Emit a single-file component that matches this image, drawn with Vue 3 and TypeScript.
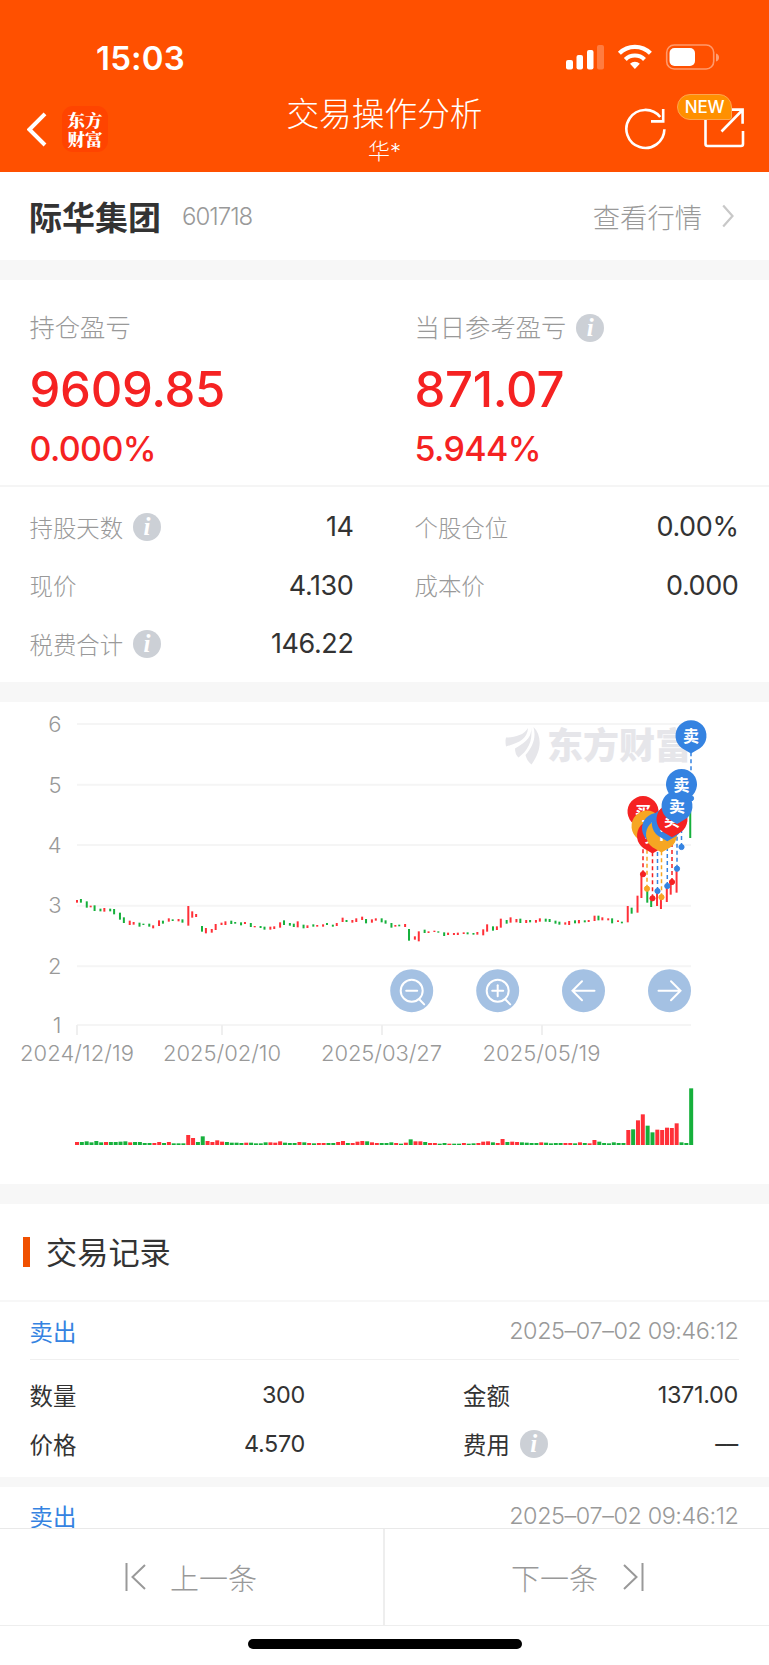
<script setup lang="ts">
type Tone = 'r' | 'g'
interface Candle { x: number; y: number; h: number; tone: Tone }
interface Bar { x: number; h: number; tone: Tone }
interface Trade { x: number; y: number; kind: 'buy' | 'sell' | 'both' }

// tone + top-bottom of each daily candle, in thirds of a pixel below the chart's top edge
const candleData = `r600-608 g597-608 g604-623 r617-622 g616-633 g626-634 r624-635 g626-634 g627-643 g638-659
g652-669 r662-675 r666-674 g668-680 g671-675 g671-680 r676-685 r661-678 g662-671 r655-665
g658-663 r657-664 g658-668 r618-677 r634-653 r642-651 g678-695 r684-700 r687-698 r672-690
r668-675 r664-675 g662-672 g666-671 g667-676 r666-672 g669-681 r678-682 g678-684 g680-689
r680-689 r679-687 r667-683 g661-675 g669-677 g671-681 r664-682 g674-685 r676-684 g673-680
r675-680 r673-680 g669-675 g674-680 r669-678 r653-666 g660-666 r660-668 r655-666 r650-660
g657-670 r658-668 r655-662 g655-667 g661-671 g669-683 r675-680 g674-679 r672-681 g687-722
r709-719 r694-724 g689-699 r694-699 r692-696 g694-698 g697-708 r698-705 r699-705 r698-705
r697-702 g697-703 g699-704 r696-704 r688-706 r673-695 g679-692 r679-690 r656-683 g660-671
r652-668 r657-667 g656-669 r660-669 g660-667 r660-668 r655-665 g656-665 g657-666 g662-671
g665-674 r667-674 r663-675 g661-670 r660-670 g661-667 r660-666 r647-663 g647-661 r652-661
r655-661 g655-670 r661-666 g665-670 r618-667 g623-641 r587-638 r528-594 g572-608 g601-621
r578-618 r597-627 r563-606 r551-584 r512-578 r441-443 r320-323 g335-414`

const volumeData = `r9 g9 g11 g8 g12 g8 r9 g9 g9 g10 g11 r8 g9 g9 g6 g6 r6 r9 g6 r9 g5 g5 g5 r30 r21 g9 g26 r12 r9 r14
r10 g9 g7 g7 g6 r7 g7 g5 g5 g8 r8 r7 r11 g7 g6 g6 r9 g8 r6 g5 r6 r6 g6 g6 r9 r12 g6 r6 r10 r12
g11 r8 r6 g6 g6 g8 r6 g4 r7 g17 r11 r11 g9 r6 r6 g4 g6 r4 g4 g4 r6 g4 g5 r6 r10 r11 g8 r6 r18 g9
r10 r9 g8 g7 g6 g6 r8 g7 g5 g6 g6 r6 r6 g5 r8 g6 r5 r15 g10 g6 g5 g8 g6 g6 r45 g47 r74 r92 g58 g38
r46 r45 r52 r51 r65 g8 g6 g170`

const candles: Candle[] = candleData.split(/\s+/).map((s, i) => {
  const [a, b] = s.slice(1).split('-').map(Number)
  return { x: 77 + 1.953 * Math.floor(0.05 + 2.4765 * i), y: a / 3 - 2, h: (b - a) / 3, tone: s[0] as Tone }
})
const bars: Bar[] = volumeData.split(/\s+/).map((s, i) => ({
  x: 77 + 4.836 * i, h: Number(s.slice(1)) / 3, tone: s[0] as Tone,
}))

const trades: Trade[] = [
  { x: 643, y: 172.2, kind: 'buy' },
  { x: 647, y: 186.7, kind: 'both' },
  { x: 652.5, y: 196.3, kind: 'buy' },
  { x: 657.5, y: 189, kind: 'sell' },
  { x: 661.5, y: 195.2, kind: 'both' },
  { x: 667.3, y: 184, kind: 'sell' },
  { x: 672, y: 180, kind: 'buy' },
  { x: 677, y: 166.7, kind: 'sell' },
  { x: 681.5, y: 145, kind: 'sell' },
  { x: 691, y: 96.3, kind: 'sell' },
]
const label = { buy: '买', sell: '卖', both: 'T' }

const grid = [22, 82.7, 143, 203.7, 264.2, 323]
const yLabels = ['6', '5', '4', '3', '2', '1']
const xLabels = [
  { t: '2024/12/19', x: 77, w: 114 },
  { t: '2025/02/10', x: 222, w: 118 },
  { t: '2025/03/27', x: 381.5, w: 121 },
  { t: '2025/05/19', x: 541.5, w: 118 },
]
const tools = [
  { x: 411.7, icon: 'minus' },
  { x: 497.7, icon: 'plus' },
  { x: 583.5, icon: 'left' },
  { x: 669.5, icon: 'right' },
]
const metrics = [
  { l: '持股天数', v: '14', info: true },
  { l: '个股仓位', v: '0.00%', info: false },
  { l: '现价', v: '4.130', info: false },
  { l: '成本价', v: '0.000', info: false },
  { l: '税费合计', v: '146.22', info: true },
]
const records = [
  { side: '卖出', time: '2025–07–02 09:46:12', qty: '300', amount: '1371.00', price: '4.570', fee: '––' },
  { side: '卖出', time: '2025–07–02 09:46:12', qty: '300', amount: '1371.00', price: '4.570', fee: '––' },
]
</script>

<template>
  <div class="screen">
    <header class="header">
      <div class="status">
        <span class="clock">15:03</span>
        <svg class="status-icons" width="156" height="28" viewBox="0 0 156 28" fill="#fff">
          <rect x="0" y="16" width="7" height="9.5" rx="2" />
          <rect x="10.5" y="11" width="6.5" height="14.5" rx="2" />
          <rect x="21" y="6" width="6.5" height="19.5" rx="2" />
          <rect x="31" y="1" width="7" height="24.5" rx="2" opacity=".25" />
          <g fill="none" stroke="#fff" stroke-width="4.2">
            <path d="M53.4 9.2a22 22 0 0 1 31 0" />
            <path d="M59.3 15.4a13.8 13.8 0 0 1 19.2 0" />
          </g>
          <path d="M68.9 25 L64 19.8a7 7 0 0 1 9.8 0z" />
          <rect x="100.7" y="1" width="47" height="24" rx="7.5" fill="none" stroke="#fff" stroke-width="1.6" opacity=".42" />
          <rect x="103.5" y="4" width="25.5" height="18" rx="5" />
          <path d="M150 9.5q3 .8 3 4t-3 4z" opacity=".45" />
        </svg>
      </div>
      <div class="nav">
        <div class="nav-left">
          <svg width="20" height="35" viewBox="0 0 20 35"><path d="M18 1.8 L2.4 17.5 L18 33" fill="none" stroke="#fff" stroke-width="4" /></svg>
          <div class="brand"><span>东方</span><span>财富</span></div>
        </div>
        <div class="titles">
          <div class="title">交易操作分析</div>
          <div class="subtitle">华*</div>
        </div>
        <div class="nav-right">
          <svg width="126" height="58" viewBox="0 0 126 58" fill="none" stroke="#fff" stroke-width="2.6">
            <path d="M43.4 36.2a19 19 0 1 1-4.2-12.2" />
            <path d="M42.2 16v12.4H30" />
            <path d="M84.5 22v29a2 2 0 0 0 2 2h33.5a2 2 0 0 0 2-2V38" />
            <path d="M108 16.6h13.6v14.2M121 17.5 L100.5 38.5" />
          </svg>
          <span class="new">NEW</span>
        </div>
      </div>
    </header>

    <section class="stock">
      <b>际华集团</b><span class="code">601718</span>
      <span class="quote">查看行情</span>
      <svg width="13" height="24" viewBox="0 0 13 24"><path d="M1.2 1.5 L10.5 12 L1.2 22.5" fill="none" stroke="#c8c8c8" stroke-width="2.2" /></svg>
    </section>

    <section class="summary">
      <div>
        <div class="cap">持仓盈亏</div>
        <div class="big">9609.85</div>
        <div class="pct">0.000%</div>
      </div>
      <div>
        <div class="cap">当日参考盈亏<i class="info">i</i></div>
        <div class="big day">871.07</div>
        <div class="pct">5.944%</div>
      </div>
    </section>
    <section class="metrics">
      <div v-for="m in metrics" :key="m.l" class="metric">
        <span>{{ m.l }}</span><i v-if="m.info" class="info">i</i><em>{{ m.v }}</em>
      </div>
    </section>

    <section class="chart">
      <svg width="769" height="482" viewBox="0 0 769 482">
        <g stroke="#f5f5f5" stroke-width="2">
          <line v-for="y in grid" :key="y" x1="77" x2="691" :y1="y" :y2="y" />
        </g>
        <g stroke="#efefef" stroke-width="2">
          <line v-for="l in xLabels" :key="l.t" :x1="Math.round(l.x)" :x2="Math.round(l.x)" y1="323" y2="333" />
        </g>
        <g class="axis">
          <text v-for="(t, i) in yLabels" :key="t" x="61.5" :y="[30, 90.5, 151, 211, 271.5, 331][i]" text-anchor="end">{{ t }}</text>
          <text v-for="l in xLabels" :key="l.t" :x="l.x" y="358.5" text-anchor="middle" :textLength="l.w">{{ l.t }}</text>
        </g>
        <g fill="#e6e6ea">
          <path d="M506 35.5c8-.2 18-2 22-9.500c-.5 10.500-9 15-22 18.500q-1-5 0-9z" />
          <path d="M531 25c1 9-3 14-16 21.500q0 6 3.500 9c8-6 15-15 12.500-30.500z" />
          <path d="M533.500 25c9 9 8 24-2 37.500q-5-4-6-9.500c7-8 11-17 8-28z" />
          <text x="547" y="57" class="mark" textLength="144">东方财富</text>
        </g>
        <rect v-for="(c, i) in candles" :key="i" :class="c.tone" :x="c.x - 1" :y="c.y" width="2" :height="c.h" />
        <rect v-for="(b, i) in bars" :key="'v' + i" :class="b.tone" :x="b.x - 2" :y="443 - b.h" width="4" :height="b.h" />
        <g v-for="(t, i) in trades" :key="'l' + i" :class="t.kind">
          <line :x1="t.x" :x2="t.x" :y1="t.y - 46" :y2="t.y" class="lead" />
          <circle :cx="t.x" :cy="t.y" r="2.6" />
        </g>
        <g v-for="(t, i) in trades" :key="'p' + i" :class="t.kind" :transform="`translate(${t.x} ${t.y - 62.5})`">
          <path d="M-9 12.500 L0 17.700 L9 12.500 A15.500 15.500 0 1 0-9 12.500z" />
          <text y="6" text-anchor="middle" class="pin">{{ label[t.kind] }}</text>
        </g>
        <g v-for="t in tools" :key="t.icon" :transform="`translate(${t.x} 288.700)`" fill="none" stroke="#fff" stroke-width="2" stroke-linecap="round">
          <circle r="21.500" fill="#a4c1e3" stroke="none" />
          <template v-if="t.icon === 'minus' || t.icon === 'plus'">
            <circle r="11" />
            <path d="M-5.500 0h11M7.500 8.500 L12.500 13.700" />
            <path v-if="t.icon === 'plus'" d="M0-5.500v11" />
          </template>
          <path v-else-if="t.icon === 'left'" d="M11 0H-11M-1.500-9.500 L-11 0 L-1.500 9.500" />
          <path v-else d="M-11 0H11M1.500-9.500 L11 0 L1.500 9.500" />
        </g>
      </svg>
    </section>

    <h2 class="heading">交易记录</h2>
    <article v-for="(r, i) in records" :key="i" class="record">
      <div class="top"><span class="side">{{ r.side }}</span><time>{{ r.time }}</time></div>
      <dl>
        <dt>数量</dt><dd>{{ r.qty }}</dd>
        <dt class="second">金额</dt><dd>{{ r.amount }}</dd>
        <dt>价格</dt><dd>{{ r.price }}</dd>
        <dt class="second">费用<i class="info">i</i></dt><dd class="fee">{{ r.fee }}</dd>
      </dl>
    </article>

    <footer class="footer">
      <div class="pager">
        <button class="prev">
          <svg width="22" height="28" viewBox="0 0 22 28"><path d="M1.500 0v28M20 2 L7.500 14 L20 26" fill="none" stroke="#999" stroke-width="2" /></svg>
          <span>上一条</span>
        </button>
        <button class="next">
          <span>下一条</span>
          <svg width="22" height="28" viewBox="0 0 22 28"><path d="M20.500 0v28M2 2 L14.500 14 L2 26" fill="none" stroke="#999" stroke-width="2" /></svg>
        </button>
      </div>
      <div class="home"></div>
    </footer>
  </div>
</template>

<style>
body { background: #fff; }
</style>

<style scoped>
* { box-sizing: border-box; }
.screen {
  position: relative; width: 769px; height: 1665px; overflow: hidden; background: #fff; color: #333;
  font-family: Inter, "Noto Sans CJK SC", sans-serif; font-weight: 300; letter-spacing: 0;
}
.header { height: 172px; background: #ff5000; color: #fff; }
.status { height: 90px; display: flex; justify-content: space-between; align-items: flex-start; padding: 44px 62px 0 96px; }
.clock { font-size: 33px; line-height: 28px; font-weight: 600; letter-spacing: .2px; }
.status-icons { margin-right: -15px; }
.nav { display: grid; grid-template-columns: 240px 1fr 240px; height: 82px; }
.nav-left { display: flex; padding: 22px 0 0 27px; gap: 15px; }
.brand { width: 46px; height: 46px; margin-top: -6px; border-radius: 11px; background: #ff4400; display: flex; flex-direction: column; justify-content: center; align-items: center; }
.brand span { font: 900 17.5px/19px "Noto Serif CJK SC", "Noto Sans CJK SC", sans-serif; }
.nav-left svg { margin-top: 0; }
.titles { text-align: center; }
.title { font-size: 32.700px; line-height: 48px; margin: 0 -20px; }
.subtitle { font-size: 22px; line-height: 26px; }
.nav-right { position: relative; padding: 3px 0 0 92px; }
.nav-right svg { display: block; }
.new {
  position: absolute; left: 148px; top: 4px; width: 55px; height: 26px; border-radius: 13px 13px 3px 13px; border: 1px solid #ffa44e;
  background: #ff9000; font-size: 17px; line-height: 24px; font-weight: 500; text-align: center; letter-spacing: -.2px;
}
.stock { height: 88px; display: flex; align-items: center; padding: 0 34px 0 29px; color: #999; }
.stock b { font-size: 33px; font-weight: 700; color: #333; }
.code { font-size: 24px; margin-left: 21px; letter-spacing: -1px; }
.quote { margin-left: auto; margin-right: 20px; font-size: 27.300px; }
.summary { border-top: 20px solid #f7f7f7; border-bottom: 2px solid #f5f5f5; height: 227px; display: grid; grid-template-columns: 385px 1fr; padding: 28px 0 0 29.500px; }
.cap { display: flex; align-items: center; font-size: 25.300px; line-height: 40px; height: 40px; color: #999; }
.big { font-size: 49px; line-height: 60px; margin-top: 12px; font-weight: 500; color: #f52222; letter-spacing: -.3px; }
.pct { font-size: 34px; line-height: 44px; margin-top: 7px; font-weight: 500; color: #f52222; letter-spacing: -.6px; }
.info {
  display: inline-block; flex: none; width: 28px; height: 28px; border-radius: 50%; background: #ccd0d6; color: #fff; margin-left: 10px;
  font: italic bold 25px/27px "Liberation Serif", serif; text-align: center;
}
.metrics { height: 195px; padding: 10.500px 31px 0 29.500px; display: grid; grid-template-columns: 324px 324px; column-gap: 61px; grid-auto-rows: 58.600px; }
.metric { display: flex; align-items: center; font-size: 23.400px; color: #999; }
.metric em { margin-left: auto; font-style: normal; font-size: 27px; color: #333; letter-spacing: -.4px; font-weight: 400; }
.chart { border-top: 20px solid #f7f7f7; border-bottom: 20px solid #f7f7f7; height: 522px; }
.chart svg { display: block; }
.r { fill: #ff3038; }
.g { fill: #16b03c; }
.axis { fill: #999; font-size: 22px; font-weight: 300; }
.mark { font-weight: 900; font-size: 36px; }
.buy { fill: #f52222; stroke: #f52222; }
.sell { fill: #3583e1; stroke: #3583e1; }
.both { fill: #f6a623; stroke: #f6a623; }
.buy path, .sell path, .both path { stroke: none; }
.lead { stroke-width: 1.500; stroke-dasharray: 4 3; }
.pin { fill: #fff; stroke: none; font-size: 16px; font-weight: 700; }
.heading { margin: 0; height: 98px; padding: 0 0 3px 46px; border-bottom: 2px solid #f7f7f7; display: flex; align-items: center; font-size: 31.200px; font-weight: 400; position: relative; }
.heading::before { content: ""; position: absolute; left: 23px; top: 33px; width: 7px; height: 30px; background: #f05000; }
.record { border-bottom: 10px solid #f7f7f7; height: 185px; font-size: 23.400px; font-weight: 400; }
.top { margin: 0 30.500px 0 29.500px; height: 58px; border-bottom: 1px solid #f0f0f0; display: flex; justify-content: space-between; align-items: center; }
.side { color: #3583e1; }
time { color: #999; font-weight: 300; letter-spacing: -.4px; }
dl { margin: 0; padding: 10px 31px 0 29.500px; display: grid; grid-template-columns: 120px 155px 158px 1fr; column-gap: 0; grid-auto-rows: 49px; align-items: center; }
dt { display: flex; align-items: center; }
dt.second { padding-left: 158px; margin-right: -60px; }
dl { grid-template-columns: 120px 155.500px 270px 1fr; }
dd { margin: 0; text-align: right; letter-spacing: -.3px; }
.footer { position: absolute; left: 0; right: 0; bottom: 0; height: 137px; background: #fff; border-top: 1px solid #e9e9e9; }
.pager { display: grid; grid-template-columns: 385px 384px; height: 97px; border-bottom: 1px solid #eee; }
button { display: flex; align-items: center; border: 0; padding: 0; background: #fff; color: #999; font: inherit; font-size: 29px; }
.prev { padding-left: 125px; gap: 23px; border-right: 2px solid #eee; }
.next { padding-left: 126px; gap: 24px; }
.home { width: 274px; height: 10px; margin: 13px auto 0; border-radius: 5px; background: #000; }
</style>
